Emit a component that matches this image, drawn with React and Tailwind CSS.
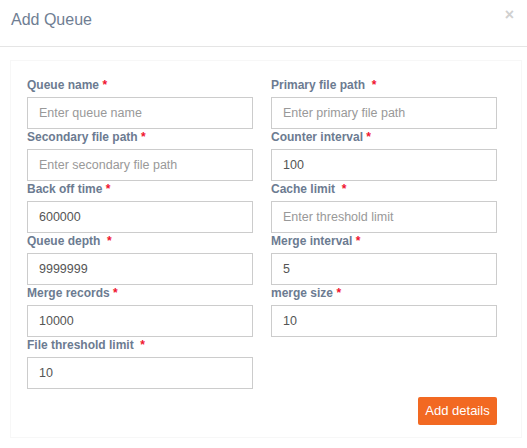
const fields = [
  { label: "Queue name", gap: false, placeholder: "Enter queue name" },
  { label: "Primary file path", gap: true, placeholder: "Enter primary file path" },
  { label: "Secondary file path", gap: false, placeholder: "Enter secondary file path" },
  { label: "Counter interval", gap: false, value: "100" },
  { label: "Back off time", gap: false, value: "600000" },
  { label: "Cache limit", gap: true, placeholder: "Enter threshold limit" },
  { label: "Queue depth", gap: true, value: "9999999" },
  { label: "Merge interval", gap: false, value: "5" },
  { label: "Merge records", gap: false, value: "10000" },
  { label: "merge size", gap: false, value: "10" },
  { label: "File threshold limit", gap: true, value: "10" },
];

function Field(props) {
  return (
    <div className="flex flex-col">
      <label className="h-[17px] mb-[3px] text-[12px] leading-[17px] font-bold text-[#6c7b91]">
        {props.label}
        {props.gap ? "\u00a0\u00a0" : "\u00a0"}
        <span className="text-[#f0142f]">*</span>
      </label>
      <input
        className="h-[32px] w-full border border-[#cccccc] px-[11px] text-[12.5px] text-[#555555] placeholder:text-[#999999] outline-none"
        placeholder={props.placeholder}
        defaultValue={props.value}
      />
    </div>
  );
}

export default function App() {
  return (
    <div className="w-[527px] h-[448px] bg-white font-['Liberation_Sans',Arial,sans-serif]">
      <div className="h-[47px] flex items-start justify-between border-b border-[#e5e5e5] pl-[11px] pr-[13px]">
        <h4 className="mt-[10px] text-[16px] leading-[20px] text-[#6f7e93]">Add Queue</h4>
        <span className="mt-[7px] text-[16px] leading-[16px] font-bold text-[#d0d0d0]">×</span>
      </div>
      <div className="pl-[10px] pr-[5px] pt-[13px]">
        <div className="border border-[#f7f7f7] pl-[16px] pr-[24px] pt-[16px] pb-[12px]">
          <div className="grid grid-cols-2 gap-x-[18px]">
            {fields.map((f) => (
              <Field key={f.label} {...f} />
            ))}
          </div>
          <div className="flex justify-end mt-[8px]">
            <button className="h-[28px] w-[79px] rounded-[2px] bg-[#f26922] text-white text-[13px]">
              Add details
            </button>
          </div>
        </div>
      </div>
    </div>
  );
}
